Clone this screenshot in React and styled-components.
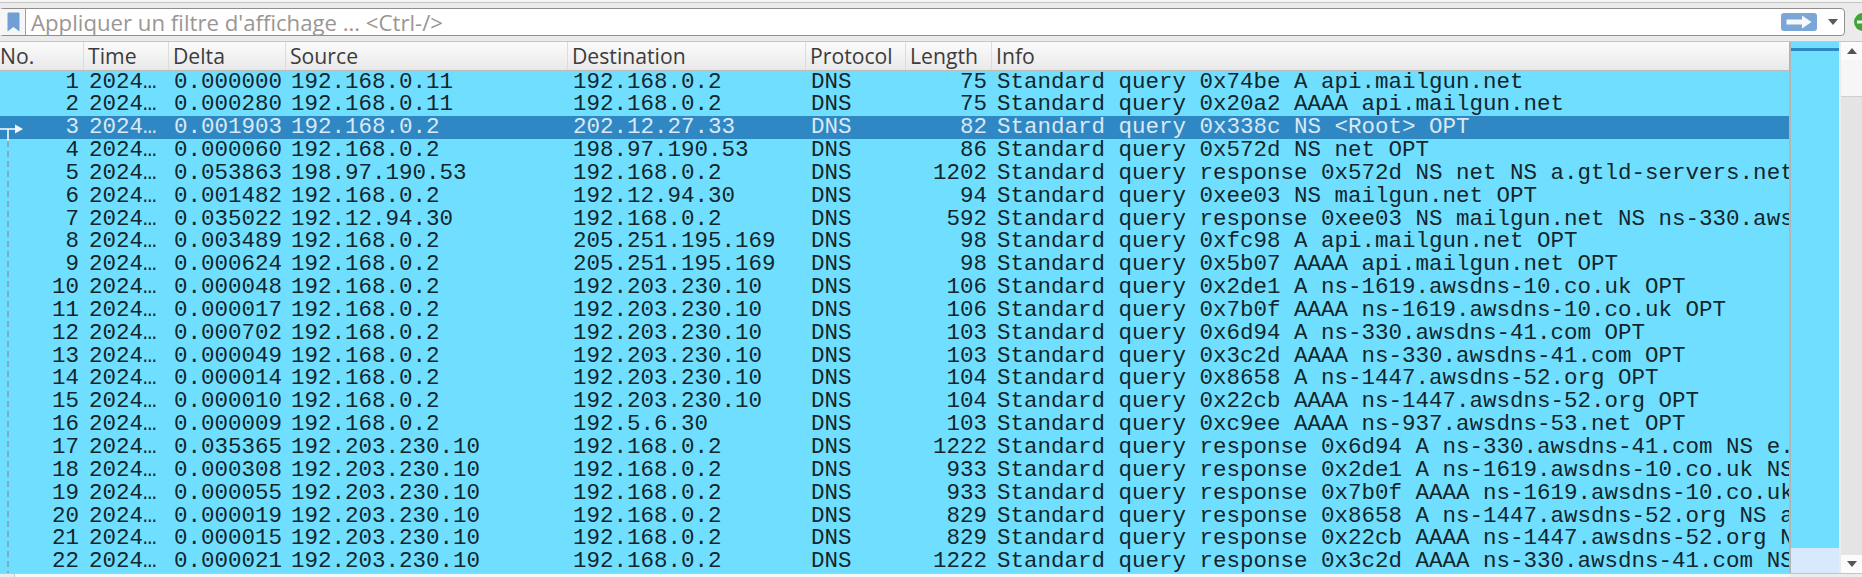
import React from "react";
import styled, { createGlobalStyle } from "styled-components";

const columns = "84px 85px 117px 282px 238px 100px 86px 1fr";

const packets = [
  [1, "0.000000", "192.168.0.11", "192.168.0.2", 75, "Standard query 0x74be A api.mailgun.net"],
  [2, "0.000280", "192.168.0.11", "192.168.0.2", 75, "Standard query 0x20a2 AAAA api.mailgun.net"],
  [3, "0.001903", "192.168.0.2", "202.12.27.33", 82, "Standard query 0x338c NS <Root> OPT"],
  [4, "0.000060", "192.168.0.2", "198.97.190.53", 86, "Standard query 0x572d NS net OPT"],
  [5, "0.053863", "198.97.190.53", "192.168.0.2", 1202, "Standard query response 0x572d NS net NS a.gtld-servers.net"],
  [6, "0.001482", "192.168.0.2", "192.12.94.30", 94, "Standard query 0xee03 NS mailgun.net OPT"],
  [7, "0.035022", "192.12.94.30", "192.168.0.2", 592, "Standard query response 0xee03 NS mailgun.net NS ns-330.aws"],
  [8, "0.003489", "192.168.0.2", "205.251.195.169", 98, "Standard query 0xfc98 A api.mailgun.net OPT"],
  [9, "0.000624", "192.168.0.2", "205.251.195.169", 98, "Standard query 0x5b07 AAAA api.mailgun.net OPT"],
  [10, "0.000048", "192.168.0.2", "192.203.230.10", 106, "Standard query 0x2de1 A ns-1619.awsdns-10.co.uk OPT"],
  [11, "0.000017", "192.168.0.2", "192.203.230.10", 106, "Standard query 0x7b0f AAAA ns-1619.awsdns-10.co.uk OPT"],
  [12, "0.000702", "192.168.0.2", "192.203.230.10", 103, "Standard query 0x6d94 A ns-330.awsdns-41.com OPT"],
  [13, "0.000049", "192.168.0.2", "192.203.230.10", 103, "Standard query 0x3c2d AAAA ns-330.awsdns-41.com OPT"],
  [14, "0.000014", "192.168.0.2", "192.203.230.10", 104, "Standard query 0x8658 A ns-1447.awsdns-52.org OPT"],
  [15, "0.000010", "192.168.0.2", "192.203.230.10", 104, "Standard query 0x22cb AAAA ns-1447.awsdns-52.org OPT"],
  [16, "0.000009", "192.168.0.2", "192.5.6.30", 103, "Standard query 0xc9ee AAAA ns-937.awsdns-53.net OPT"],
  [17, "0.035365", "192.203.230.10", "192.168.0.2", 1222, "Standard query response 0x6d94 A ns-330.awsdns-41.com NS e."],
  [18, "0.000308", "192.203.230.10", "192.168.0.2", 933, "Standard query response 0x2de1 A ns-1619.awsdns-10.co.uk NS"],
  [19, "0.000055", "192.203.230.10", "192.168.0.2", 933, "Standard query response 0x7b0f AAAA ns-1619.awsdns-10.co.uk"],
  [20, "0.000019", "192.203.230.10", "192.168.0.2", 829, "Standard query response 0x8658 A ns-1447.awsdns-52.org NS a"],
  [21, "0.000015", "192.203.230.10", "192.168.0.2", 829, "Standard query response 0x22cb AAAA ns-1447.awsdns-52.org N"],
  [22, "0.000021", "192.203.230.10", "192.168.0.2", 1222, "Standard query response 0x3c2d AAAA ns-330.awsdns-41.com NS"],
];

const headers = ["No.", "Time", "Delta", "Source", "Destination", "Protocol", "Length", "Info"];

export default function App() {
  return (
    <Page>
      <GlobalStyle />
      <TopStrip />
      <FilterRow>
        <FilterBox>
          <BookmarkButton>
            <svg width="13" height="20" viewBox="0 0 13 20">
              <path d="M0.5 1.5 Q0.5 0.5 1.5 0.5 H11.5 Q12.5 0.5 12.5 1.5 V19.5 L6.5 15 L0.5 19.5 Z" fill="#6f9fd3" />
            </svg>
          </BookmarkButton>
          <Placeholder>Appliquer un filtre d'affichage … &lt;Ctrl-/&gt;</Placeholder>
          <ApplyButton>
            <svg width="26" height="14" viewBox="0 0 26 14">
              <path d="M0.5 4.5 H16 V0.5 L25.5 7 L16 13.5 V9.5 H0.5 Z" fill="#f6f9fc" />
            </svg>
          </ApplyButton>
          <DropArrow />
        </FilterBox>
        <PlusButton>
          <svg width="8" height="18" viewBox="0 0 8 18">
            <circle cx="9" cy="9" r="9" fill="#3fa535" />
            <rect x="3" y="7.5" width="5" height="3" fill="#f4f8f2" />
          </svg>
        </PlusButton>
      </FilterRow>
      <Main>
        <TableArea>
          <HeaderRow>
            {headers.map((h) => (
              <HeaderCell key={h}>{h}</HeaderCell>
            ))}
          </HeaderRow>
          <Rows>
            <RelatedLine width="30" height="458" viewBox="0 0 30 458">
              <path d="M0 12 H16" stroke="#f4f8fb" strokeWidth="1.6" fill="none" />
              <path d="M15 7.5 L23 12 L15 16.5 Z" fill="#f4f8fb" />
              <path d="M8 12 V24" stroke="#f4f8fb" strokeWidth="1.6" fill="none" />
              <path d="M8 24 V458" stroke="#7e9aa6" strokeWidth="1.4" strokeDasharray="6 4" fill="none" />
            </RelatedLine>
            {packets.map(([no, delta, src, dst, len, info]) => (
              <Row key={no} $selected={no === 3}>
                <Cell $right>{no}</Cell>
                <Cell>2024…</Cell>
                <Cell>{delta}</Cell>
                <Cell>{src}</Cell>
                <Cell>{dst}</Cell>
                <Cell>DNS</Cell>
                <Cell $right>{len}</Cell>
                <Cell>{info}</Cell>
              </Row>
            ))}
          </Rows>
        </TableArea>
        <Minimap>
          <MinimapMark />
          <MinimapFill />
          <MinimapView />
        </Minimap>
        <Scrollbar>
          <ScrollButton>
            <ArrowUp />
          </ScrollButton>
          <ScrollThumb />
          <ScrollTrack />
          <ScrollButton>
            <ArrowDown />
          </ScrollButton>
        </Scrollbar>
      </Main>
      <BottomStrip>
        <BottomGray />
        <BottomWhite />
        <BottomRest />
      </BottomStrip>
    </Page>
  );
}

const GlobalStyle = createGlobalStyle`
  html, body {
    margin: 0;
    padding: 0;
    background: #ececec;
    overflow: hidden;
  }
`;

const Page = styled.div`
  width: 1862px;
  height: 577px;
  display: flex;
  flex-direction: column;
  overflow: hidden;
  background: #ebebeb;
`;

const TopStrip = styled.div`
  height: 2px;
  margin-bottom: 5px;
  border-bottom: 1px solid #c4c4c4;
  background: #f4f4f4;
`;

const FilterRow = styled.div`
  height: 28px;
  flex: none;
  display: flex;
  align-items: center;
`;

const FilterBox = styled.div`
  flex: none;
  width: 1846px;
  height: 28px;
  margin-left: -1px;
  box-sizing: border-box;
  display: flex;
  align-items: center;
  background: #fff;
  border: 1.5px solid #8e8e8e;
  border-radius: 4px;
`;

const BookmarkButton = styled.div`
  width: 26px;
  height: 100%;
  flex: none;
  display: flex;
  align-items: center;
  justify-content: center;
  box-sizing: border-box;
  background: #f6f6f6;
  border-right: 1.5px solid #a0a0a0;
  padding-left: 2px;
`;

const Placeholder = styled.div`
  flex: 1;
  padding-left: 5px;
  font-family: "Open Sans", "Noto Sans", sans-serif;
  font-size: 22.2px;
  line-height: 25px;
  color: #9b9693;
`;

const ApplyButton = styled.div`
  width: 36px;
  height: 18px;
  display: flex;
  align-items: center;
  justify-content: center;
  background: #7ba7d7;
  border-radius: 3px;
  margin-right: 11px;
`;

const DropArrow = styled.div`
  width: 0;
  height: 0;
  margin-right: 6px;
  border-left: 5px solid transparent;
  border-right: 5px solid transparent;
  border-top: 6px solid #5a5a5a;
`;

const PlusButton = styled.div`
  flex: 1;
  min-width: 0;
  display: flex;
  align-items: center;
  padding-left: 9px;

  svg {
    flex: none;
  }
`;

const Main = styled.div`
  margin-top: 5px;
  height: 532px;
  flex: none;
  display: flex;
  border-top: 1px solid #c6c6c6;
  box-sizing: border-box;
`;

const TableArea = styled.div`
  width: 1791px;
  flex: none;
  box-sizing: border-box;
  display: flex;
  flex-direction: column;
  border-right: 2px solid #b4b4b4;
`;

const HeaderRow = styled.div`
  height: 28.5px;
  flex: none;
  box-sizing: border-box;
  display: grid;
  grid-template-columns: ${columns};
  background: linear-gradient(#fbfbfb, #e9e9e9);
  border-bottom: 1.5px solid #bcbcbc;
`;

const HeaderCell = styled.div`
  padding-left: 4px;
  border-right: 1.5px solid #dcdcdc;
  font-family: "Open Sans", "Noto Sans", sans-serif;
  font-size: 21.2px;
  line-height: 28px;
  color: #3c3c3c;
  white-space: nowrap;

  &:first-child {
    padding-left: 0;
  }
  &:last-child {
    border-right: none;
  }
`;

const Rows = styled.div`
  position: relative;
  flex: 1;
  min-height: 0;
  overflow: hidden;
  background: #70dfff;
`;

const RelatedLine = styled.svg`
  position: absolute;
  left: 0;
  top: 46px;
  z-index: 1;
`;

const Row = styled.div`
  height: 22.85px;
  display: grid;
  grid-template-columns: ${columns};
  background: ${(p) => (p.$selected ? "#2f88c4" : "#70dfff")};
  color: ${(p) => (p.$selected ? "#d9e9f4" : "#13262c")};
`;

const Cell = styled.div`
  min-width: 0;
  padding: ${(p) => (p.$right ? "0 5px 0 0" : "0 0 0 5px")};
  text-align: ${(p) => (p.$right ? "right" : "left")};
  font-family: "Liberation Mono", monospace;
  font-size: 22.5px;
  line-height: 22.85px;
  white-space: pre;
`;

const Minimap = styled.div`
  width: 48px;
  flex: none;
  display: flex;
  flex-direction: column;
  background: #70dfff;
`;

const MinimapMark = styled.div`
  height: 3px;
  margin-top: 6px;
  background: #2f88c4;
`;

const MinimapFill = styled.div`
  flex: 1;
`;

const MinimapView = styled.div`
  height: 25px;
  background: #d8e8fd;
`;

const Scrollbar = styled.div`
  flex: 1;
  display: flex;
  flex-direction: column;
  margin-left: 2px;
  background: #e4e4e4;
`;

const ScrollButton = styled.div`
  height: 18px;
  flex: none;
  display: flex;
  align-items: center;
  justify-content: center;
  background: #fbfbfb;
`;

const ArrowUp = styled.div`
  width: 0;
  height: 0;
  border-left: 5px solid transparent;
  border-right: 5px solid transparent;
  border-bottom: 6px solid #555;
`;

const ArrowDown = styled.div`
  width: 0;
  height: 0;
  border-left: 5px solid transparent;
  border-right: 5px solid transparent;
  border-top: 6px solid #555;
`;

const ScrollThumb = styled.div`
  height: 36px;
  flex: none;
  background: #f6f6f6;
  border-bottom: 1px solid #cfcfcf;
`;

const ScrollTrack = styled.div`
  flex: 1;
`;

const BottomStrip = styled.div`
  flex: 1;
  display: flex;
  background: #ececec;
  border-top: 1px solid #c4c4c4;
`;

const BottomGray = styled.div`
  width: 14px;
  border-right: 1px solid #c8c8c8;
`;

const BottomWhite = styled.div`
  width: 1775px;
  background: #f6f6f6;
`;

const BottomRest = styled.div`
  flex: 1;
`;
